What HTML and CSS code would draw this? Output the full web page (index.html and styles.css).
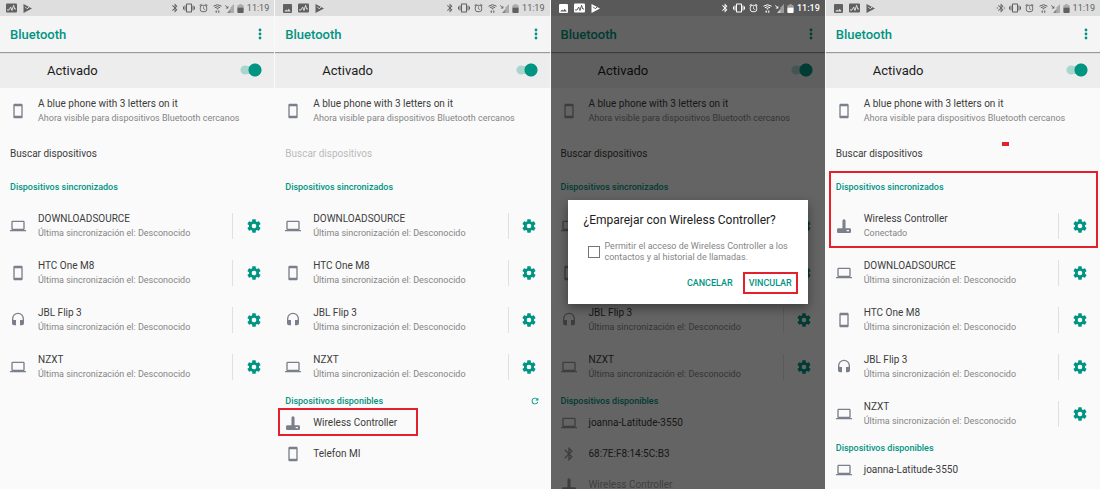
FILE: index.html
```
<!DOCTYPE html>
<html lang="es">
<head>
<meta charset="utf-8">
<title>Bluetooth</title>
<link rel="stylesheet" href="styles.css">
</head>
<body>
<svg class="sprite" aria-hidden="true">
  <symbol id="phone" viewBox="0 0 24 24"><path d="M17 1H7c-1.100 0-2 .9-2 2v18c0 1.100.9 2 2 2h10c1.100 0 2-.9 2-2V3c0-1.100-.9-2-2-2zm0 18H7V5h10v14z"/></symbol>
  <symbol id="laptop" viewBox="0 0 24 24"><path d="M20 18c1.100 0 2-.9 2-2V6c0-1.100-.9-2-2-2H4c-1.100 0-2 .9-2 2v10c0 1.100.9 2 2 2H0v2h24v-2h-4zM4 6h16v10H4V6z"/></symbol>
  <symbol id="headset" viewBox="0 0 24 24"><path d="M12 1a9 9 0 0 0-9 9v7c0 1.660 1.340 3 3 3h3v-8H5v-2a7 7 0 0 1 14 0v2h-4v8h3c1.660 0 3-1.340 3-3v-7a9 9 0 0 0-9-9z"/></symbol>
  <symbol id="pad" viewBox="0 0 24 24"><path fill-rule="evenodd" d="M12 2a2.300 2.300 0 0 1 2.300 2.300V15.500H20.500a2 2 0 0 1 2 2v3a2 2 0 0 1-2 2H3.500a2 2 0 0 1-2-2v-3a2 2 0 0 1 2-2h6.200V4.300A2.300 2.300 0 0 1 12 2zM16 18v2h3.500v-2z"/></symbol>
  <symbol id="bt" viewBox="0 0 24 24"><path d="M17.710 7.710 12 2h-1v7.590L6.410 5 5 6.410 10.590 12 5 17.590 6.410 19 11 14.410V22h1l5.710-5.710-4.300-4.290 4.300-4.290zM13 5.830l1.880 1.880L13 9.590V5.830zm1.880 10.460L13 18.170v-3.760l1.880 1.880z"/></symbol>
  <symbol id="btc" viewBox="0 0 24 24"><path d="M17.710 7.710 12 2h-1v7.590L6.410 5 5 6.410 10.590 12 5 17.590 6.410 19 11 14.410V22h1l5.710-5.710-4.300-4.290 4.300-4.290zM13 5.830l1.880 1.880L13 9.590V5.830zm1.880 10.460L13 18.170v-3.760l1.880 1.880zM3 10l2 2-2 2-2-2zM20 10l2 2-2 2-2-2z"/></symbol>
  <symbol id="gear" viewBox="0 0 24 24"><path d="M19.430 12.980c.04-.32.070-.64.070-.98s-.03-.66-.07-.98l2.110-1.650c.19-.15.24-.42.12-.64l-2-3.460c-.12-.22-.39-.3-.61-.22l-2.490 1c-.52-.4-1.080-.73-1.690-.98l-.38-2.650A.49.49 0 0 0 14 2h-4c-.25 0-.46.18-.49.42l-.38 2.650c-.61.25-1.170.59-1.690.98l-2.490-1c-.23-.09-.49 0-.61.22l-2 3.460c-.13.22-.07.49.12.64l2.110 1.650c-.04.32-.07.65-.07.98s.03.66.07.98l-2.110 1.650c-.19.15-.24.42-.12.64l2 3.460c.12.22.39.3.61.22l2.490-1c.52.4 1.080.73 1.690.98l.38 2.650c.03.24.24.42.49.42h4c.25 0 .46-.18.49-.42l.38-2.650c.61-.25 1.170-.59 1.690-.98l2.490 1c.23.09.49 0 .61-.22l2-3.460c.12-.22.070-.49-.12-.64l-2.110-1.650zM12 15.500a3.500 3.500 0 1 1 0-7 3.500 3.500 0 0 1 0 7z"/></symbol>
  <symbol id="refresh" viewBox="0 0 24 24"><path d="M17.650 6.350A7.960 7.960 0 0 0 12 4a8 8 0 1 0 7.730 10h-2.080A6 6 0 1 1 12 6c1.660 0 3.140.69 4.220 1.780L13 11h7V4l-2.350 2.350z"/></symbol>
  <symbol id="more" viewBox="0 0 4 12"><circle cx="2" cy="2" r="1.400"/><circle cx="2" cy="6" r="1.400"/><circle cx="2" cy="10" r="1.400"/></symbol>
  <symbol id="image" viewBox="0 0 9 9"><path fill-rule="evenodd" d="M1 0h7a1 1 0 0 1 1 1v7a1 1 0 0 1-1 1H1a1 1 0 0 1-1-1V1a1 1 0 0 1 1-1zM1.300 7.500h6.400L5.700 4.800 4.200 6.700 3.100 5.400z"/></symbol>
  <symbol id="pulse" viewBox="0 0 11 9"><path d="M1 0h9a1 1 0 0 1 1 1v7a1 1 0 0 1-1 1H1a1 1 0 0 1-1-1V1a1 1 0 0 1 1-1z"/><path class="cut" d="M1 6.500h2L4.700 3.500 6 7 7.600 1.700 8.700 5.500H10"/></symbol>
  <symbol id="play" viewBox="0 0 9 9"><path d="M.5 0 9 4.500.5 9z"/><path class="cut" d="M2.200 2.800 4.200 4.800 8 1.200"/></symbol>
  <symbol id="vibrate" viewBox="0 0 24 24"><path d="M0 15h2V9H0v6zm3 2h2V7H3v10zm19-8v6h2V9h-2zm-3 8h2V7h-2v10zM16.500 3h-9C6.670 3 6 3.670 6 4.500v15c0 .83.67 1.500 1.500 1.500h9c.83 0 1.500-.67 1.500-1.500v-15c0-.83-.67-1.500-1.500-1.500zM16 19H8V5h8v14z"/></symbol>
  <symbol id="alarm" viewBox="0 0 24 24"><path d="M22 5.720l-4.600-3.860-1.290 1.530 4.600 3.860L22 5.720zM7.880 3.390 6.600 1.860 2 5.710l1.290 1.530 4.590-3.850zM12.500 8H11v6l4.750 2.850.75-1.230-4-2.370V8zM12 4a9 9 0 1 0 0 18 9 9 0 0 0 0-18zm0 16a7 7 0 1 1 0-14 7 7 0 0 1 0 14z"/></symbol>
  <symbol id="wifi" viewBox="0 0 9 9"><path class="line" d="M.5 2.200Q4.500-.8 8.500 2.200M1.900 3.700Q4.500 1.700 7.100 3.700"/><path d="M3.200 4.300h2.600L4.500 5.800zM3.200 6.200l1.100 1.200H3.600V9h-.8V7.400h-.7zM5.800 9 4.700 7.800h.7V6.200h.8v1.600h.7z"/></symbol>
  <symbol id="signal" viewBox="0 0 9 9"><path opacity=".4" d="M9 0v9H5.500V3.500z"/><path opacity=".7" d="M2 9 5.500 5v4z"/><path d="M.3 1 2.600 3.300V2h.7v2.500H.8v-.7h1.300L0 1.500z"/></symbol>
  <symbol id="battery" viewBox="0 0 7 10"><path opacity=".4" d="M2.200 0h2.600v1H6a1 1 0 0 1 1 1v2H0V2a1 1 0 0 1 1-1h1.200z"/><path d="M0 4h7v5a1 1 0 0 1-1 1H1a1 1 0 0 1-1-1z"/></symbol>
</svg>

<main class="screens">
  <section class="screen">
    <div class="status status-short">
      <svg class="i11"><use href="#pulse"/></svg><svg class="i9"><use href="#play"/></svg>
      <div class="system"><svg class="i10"><use href="#bt"/></svg><svg class="i12"><use href="#vibrate"/></svg><svg class="i11"><use href="#alarm"/></svg><svg class="i9 gap"><use href="#wifi"/></svg><svg class="i9"><use href="#signal"/></svg><svg class="bat"><use href="#battery"/></svg><span>11:19</span></div>
    </div>
    <header class="appbar"><h1>Bluetooth</h1><button class="more" aria-label="Más opciones"><svg><use href="#more"/></svg></button></header>
    <label class="master"><span>Activado</span><input type="checkbox" role="switch" class="switch" checked></label>
    <div class="self"><svg class="dev"><use href="#phone"/></svg><div><p class="name">A blue phone with 3 letters on it</p><p class="sub">Ahora visible para dispositivos Bluetooth cercanos</p></div></div>
    <button class="search">Buscar dispositivos</button>
    <h2 class="paired">Dispositivos sincronizados</h2>
    <ul>
      <li class="row"><svg class="dev"><use href="#laptop"/></svg><div class="info"><p class="name">DOWNLOADSOURCE</p><p class="sub">Última sincronización el: Desconocido</p></div><button class="gear" aria-label="Ajustes"><svg><use href="#gear"/></svg></button></li>
      <li class="row"><svg class="dev"><use href="#phone"/></svg><div class="info"><p class="name">HTC One M8</p><p class="sub">Última sincronización el: Desconocido</p></div><button class="gear" aria-label="Ajustes"><svg><use href="#gear"/></svg></button></li>
      <li class="row"><svg class="dev"><use href="#headset"/></svg><div class="info"><p class="name">JBL Flip 3</p><p class="sub">Última sincronización el: Desconocido</p></div><button class="gear" aria-label="Ajustes"><svg><use href="#gear"/></svg></button></li>
      <li class="row"><svg class="dev"><use href="#laptop"/></svg><div class="info"><p class="name">NZXT</p><p class="sub">Última sincronización el: Desconocido</p></div><button class="gear" aria-label="Ajustes"><svg><use href="#gear"/></svg></button></li>
    </ul>
  </section>

  <section class="screen">
    <div class="status">
      <svg class="i9"><use href="#image"/></svg><svg class="i11"><use href="#pulse"/></svg><svg class="i9"><use href="#play"/></svg>
      <div class="system"><svg class="i10"><use href="#bt"/></svg><svg class="i12"><use href="#vibrate"/></svg><svg class="i11"><use href="#alarm"/></svg><svg class="i9 gap"><use href="#wifi"/></svg><svg class="i9"><use href="#signal"/></svg><svg class="bat"><use href="#battery"/></svg><span>11:19</span></div>
    </div>
    <header class="appbar"><h1>Bluetooth</h1><button class="more" aria-label="Más opciones"><svg><use href="#more"/></svg></button></header>
    <label class="master"><span>Activado</span><input type="checkbox" role="switch" class="switch" checked></label>
    <div class="self"><svg class="dev"><use href="#phone"/></svg><div><p class="name">A blue phone with 3 letters on it</p><p class="sub">Ahora visible para dispositivos Bluetooth cercanos</p></div></div>
    <button class="search" disabled>Buscar dispositivos</button>
    <h2 class="paired">Dispositivos sincronizados</h2>
    <ul>
      <li class="row"><svg class="dev"><use href="#laptop"/></svg><div class="info"><p class="name">DOWNLOADSOURCE</p><p class="sub">Última sincronización el: Desconocido</p></div><button class="gear" aria-label="Ajustes"><svg><use href="#gear"/></svg></button></li>
      <li class="row"><svg class="dev"><use href="#phone"/></svg><div class="info"><p class="name">HTC One M8</p><p class="sub">Última sincronización el: Desconocido</p></div><button class="gear" aria-label="Ajustes"><svg><use href="#gear"/></svg></button></li>
      <li class="row"><svg class="dev"><use href="#headset"/></svg><div class="info"><p class="name">JBL Flip 3</p><p class="sub">Última sincronización el: Desconocido</p></div><button class="gear" aria-label="Ajustes"><svg><use href="#gear"/></svg></button></li>
      <li class="row"><svg class="dev"><use href="#laptop"/></svg><div class="info"><p class="name">NZXT</p><p class="sub">Última sincronización el: Desconocido</p></div><button class="gear" aria-label="Ajustes"><svg><use href="#gear"/></svg></button></li>
    </ul>
    <h2 class="available">Dispositivos disponibles <svg class="i10"><use href="#refresh"/></svg></h2>
    <ul>
      <li class="found marked"><svg class="dev"><use href="#pad"/></svg><p class="name">Wireless Controller</p></li>
      <li class="found"><svg class="dev"><use href="#phone"/></svg><p class="name">Telefon MI</p></li>
    </ul>
  </section>

  <section class="screen dimmed">
    <div class="status">
      <svg class="i9"><use href="#image"/></svg><svg class="i11"><use href="#pulse"/></svg><svg class="i9"><use href="#play"/></svg>
      <div class="system"><svg class="i10"><use href="#bt"/></svg><svg class="i12"><use href="#vibrate"/></svg><svg class="i11"><use href="#alarm"/></svg><svg class="i9 gap"><use href="#wifi"/></svg><svg class="i9"><use href="#signal"/></svg><svg class="bat"><use href="#battery"/></svg><span>11:19</span></div>
    </div>
    <header class="appbar"><h1>Bluetooth</h1><button class="more" aria-label="Más opciones"><svg><use href="#more"/></svg></button></header>
    <label class="master"><span>Activado</span><input type="checkbox" role="switch" class="switch" checked></label>
    <div class="self"><svg class="dev"><use href="#phone"/></svg><div><p class="name">A blue phone with 3 letters on it</p><p class="sub">Ahora visible para dispositivos Bluetooth cercanos</p></div></div>
    <button class="search">Buscar dispositivos</button>
    <h2 class="paired">Dispositivos sincronizados</h2>
    <ul>
      <li class="row"><svg class="dev"><use href="#laptop"/></svg><div class="info"></div><button class="gear" aria-label="Ajustes"><svg><use href="#gear"/></svg></button></li>
      <li class="row"><svg class="dev"><use href="#phone"/></svg><div class="info"></div><button class="gear" aria-label="Ajustes"><svg><use href="#gear"/></svg></button></li>
      <li class="row"><svg class="dev"><use href="#headset"/></svg><div class="info"><p class="name">JBL Flip 3</p><p class="sub">Última sincronización el: Desconocido</p></div><button class="gear" aria-label="Ajustes"><svg><use href="#gear"/></svg></button></li>
      <li class="row"><svg class="dev"><use href="#laptop"/></svg><div class="info"><p class="name">NZXT</p><p class="sub">Última sincronización el: Desconocido</p></div><button class="gear" aria-label="Ajustes"><svg><use href="#gear"/></svg></button></li>
    </ul>
    <h2 class="available">Dispositivos disponibles</h2>
    <ul>
      <li class="found"><svg class="dev"><use href="#laptop"/></svg><p class="name">joanna-Latitude-3550</p></li>
      <li class="found"><svg class="dev"><use href="#bt"/></svg><p class="name">68:7E:F8:14:5C:B3</p></li>
      <li class="found pending"><svg class="dev"><use href="#pad"/></svg><p class="name">Wireless Controller</p></li>
    </ul>
    <div class="scrim">
      <div class="dialog" role="dialog" aria-labelledby="pair-title">
        <h2 id="pair-title">¿Emparejar con Wireless Controller?</h2>
        <label class="allow"><input type="checkbox"><span>Permitir el acceso de Wireless Controller a los contactos y al historial de llamadas.</span></label>
        <div class="actions"><button>CANCELAR</button><button class="boxed">VINCULAR</button></div>
      </div>
    </div>
  </section>

  <section class="screen">
    <div class="status">
      <svg class="i9"><use href="#image"/></svg><svg class="i11"><use href="#pulse"/></svg><svg class="i9"><use href="#play"/></svg>
      <div class="system"><svg class="i10"><use href="#btc"/></svg><svg class="i12"><use href="#vibrate"/></svg><svg class="i11"><use href="#alarm"/></svg><svg class="i9 gap"><use href="#wifi"/></svg><svg class="i9"><use href="#signal"/></svg><svg class="bat"><use href="#battery"/></svg><span>11:19</span></div>
    </div>
    <header class="appbar"><h1>Bluetooth</h1><button class="more" aria-label="Más opciones"><svg><use href="#more"/></svg></button></header>
    <label class="master"><span>Activado</span><input type="checkbox" role="switch" class="switch" checked></label>
    <div class="self"><svg class="dev"><use href="#phone"/></svg><div><p class="name">A blue phone with 3 letters on it</p><p class="sub">Ahora visible para dispositivos Bluetooth cercanos</p></div></div>
    <button class="search dashed">Buscar dispositivos</button>
    <div class="group">
      <h2 class="paired">Dispositivos sincronizados</h2>
      <div class="row"><svg class="dev"><use href="#pad"/></svg><div class="info"><p class="name">Wireless Controller</p><p class="sub">Conectado</p></div><button class="gear" aria-label="Ajustes"><svg><use href="#gear"/></svg></button></div>
    </div>
    <ul>
      <li class="row"><svg class="dev"><use href="#laptop"/></svg><div class="info"><p class="name">DOWNLOADSOURCE</p><p class="sub">Última sincronización el: Desconocido</p></div><button class="gear" aria-label="Ajustes"><svg><use href="#gear"/></svg></button></li>
      <li class="row"><svg class="dev"><use href="#phone"/></svg><div class="info"><p class="name">HTC One M8</p><p class="sub">Última sincronización el: Desconocido</p></div><button class="gear" aria-label="Ajustes"><svg><use href="#gear"/></svg></button></li>
      <li class="row"><svg class="dev"><use href="#headset"/></svg><div class="info"><p class="name">JBL Flip 3</p><p class="sub">Última sincronización el: Desconocido</p></div><button class="gear" aria-label="Ajustes"><svg><use href="#gear"/></svg></button></li>
      <li class="row"><svg class="dev"><use href="#laptop"/></svg><div class="info"><p class="name">NZXT</p><p class="sub">Última sincronización el: Desconocido</p></div><button class="gear" aria-label="Ajustes"><svg><use href="#gear"/></svg></button></li>
    </ul>
    <h2 class="available">Dispositivos disponibles</h2>
    <ul>
      <li class="found"><svg class="dev"><use href="#laptop"/></svg><p class="name">joanna-Latitude-3550</p></li>
    </ul>
  </section>
</main>
</body>
</html>
```
FILE: styles.css
```
*, *::after { box-sizing: border-box; margin: 0; padding: 0; }

:root {
  --teal: #009482;
  --red: #e3202c;
  --bar: #dedede;
}

body {
  height: 100vh;
  overflow: hidden;
  background: #fafafa;
  color: #3c3c3c;
  font-family: Roboto, "Liberation Sans", sans-serif;
  font-size: 10px;
  line-height: 15px;
}

ul { list-style: none; }
button { border: 0; background: none; color: inherit; font: inherit; }
svg { display: block; flex: none; fill: currentColor; }
.sprite { position: absolute; width: 0; height: 0; }

.screens {
  display: grid;
  grid-template-columns: repeat(4, minmax(0, 1fr));
  column-gap: 1px;
  height: 100%;
}
.screen { position: relative; overflow: hidden; background: #fafafa; }

/* Status bar */
.status {
  display: flex;
  align-items: center;
  gap: 6px;
  height: 16px;
  padding: 0 5px 0 8px;
  background: var(--bar);
  color: #606060;
}
.status-short { padding-left: 6px; }
.system { display: flex; align-items: center; gap: 3px; margin-left: auto; }
.system .gap { margin-left: 1px; }
.system span { font-size: 9px; }
.cut { fill: none; stroke: var(--bar); stroke-width: 1; }
.line { fill: none; stroke: currentColor; stroke-width: 1; }
.i9 { width: 9px; height: 9px; }
.i10 { width: 10px; height: 10px; }
.i11 { width: 11px; height: 10px; }
.i12 { width: 12px; height: 12px; }
.bat { width: 7px; height: 9px; }

/* App bar and master switch */
.appbar {
  position: relative;
  display: flex;
  align-items: center;
  justify-content: space-between;
  height: 36px;
  padding: 0 12px 0 10px;
  background: #f5f5f5;
  box-shadow: 0 1px 1px #00000059;
  color: var(--teal);
}
h1 { font-size: 13px; font-weight: 500; }
.more svg { width: 4px; height: 12px; }

.master {
  display: flex;
  align-items: center;
  justify-content: space-between;
  height: 36px;
  padding: 0 12px 0 47px;
  background: #ededed;
  color: #1c1c1c;
  font-size: 13px;
}
.switch {
  appearance: none;
  width: 22px;
  height: 14px;
  background:
    radial-gradient(circle at 15px 50%, var(--teal) 6px, transparent 7px),
    linear-gradient(#a9d5cf, #a9d5cf) 5px 50% / 14px 8px no-repeat,
    radial-gradient(circle at 5px 50%, #a9d5cf 4px, transparent 5px);
}

/* Devices */
.self { display: flex; align-items: center; height: 46px; margin-bottom: 3px; padding-left: 10px; gap: 12px; }
.dev { width: 16px; height: 16px; color: #7b7f8b; }
.sub { color: #858585; font-size: 9px; }
.search { display: block; position: relative; width: 100%; height: 32px; padding-left: 10px; text-align: left; }
.search:disabled { color: #bababa; }
h2 { color: var(--teal); font-size: 9px; font-weight: 500; }
.paired { padding: 11px 10px 7px; }
.row { display: flex; align-items: center; gap: 12px; height: 47px; padding-left: 10px; }
.info { flex: 1; }
.gear {
  display: grid;
  place-items: center;
  width: 42px;
  height: 26px;
  border-left: 1px solid #e0e0e0;
  color: var(--teal);
}
.gear svg { width: 16px; height: 16px; }
.available {
  display: flex;
  align-items: center;
  justify-content: space-between;
  height: 17px;
  padding: 5px 10px 0 10px;
}
.found { display: flex; align-items: center; position: relative; gap: 12px; height: 31px; padding-left: 10px; }
.pending .name { color: #a0a0a0; }

/* Red callouts drawn over the lists */
.marked::after { content: ""; position: absolute; inset: 1px auto 2px 3px; width: 140px; border: 2px solid var(--red); }
.group { position: relative; }
.group::after { content: ""; position: absolute; inset: 2px 2px 1px 3px; border: 2px solid var(--red); pointer-events: none; }
.dashed::after { content: ""; position: absolute; top: 5px; right: 91px; width: 7px; height: 4px; background: var(--red); }

/* Pairing dialog */
.dimmed { --bar: #595959; }
.dimmed .status { position: relative; z-index: 2; color: #fff; }
.dimmed .system span { font-weight: 500; }
.dimmed .dev { color: #9a9a9a; }
.scrim {
  position: absolute;
  inset: 0;
  z-index: 1;
  display: grid;
  align-items: center;
  padding: 14px 17px 0;
  background: #00000099;
}
.dialog { padding: 12px 10px 10px 16px; background: #fff; box-shadow: 0 4px 10px #00000066; }
.dialog h2 { color: #212121; font-size: 12px; font-weight: 400; line-height: 16px; }
.allow { display: flex; align-items: center; gap: 5px; margin-top: 13px; padding-left: 4px; color: #858585; font-size: 9px; line-height: 11px; }
.allow input { appearance: none; flex: none; width: 12px; height: 12px; border: 1px solid #757575; }
.actions { display: flex; justify-content: flex-end; gap: 10px; margin-top: 9px; color: var(--teal); font-size: 9px; font-weight: 500; }
.actions button { height: 22px; padding-top: 2px; }
.actions .boxed { padding: 2px 4px 0; border: 2px solid var(--red); }
```
